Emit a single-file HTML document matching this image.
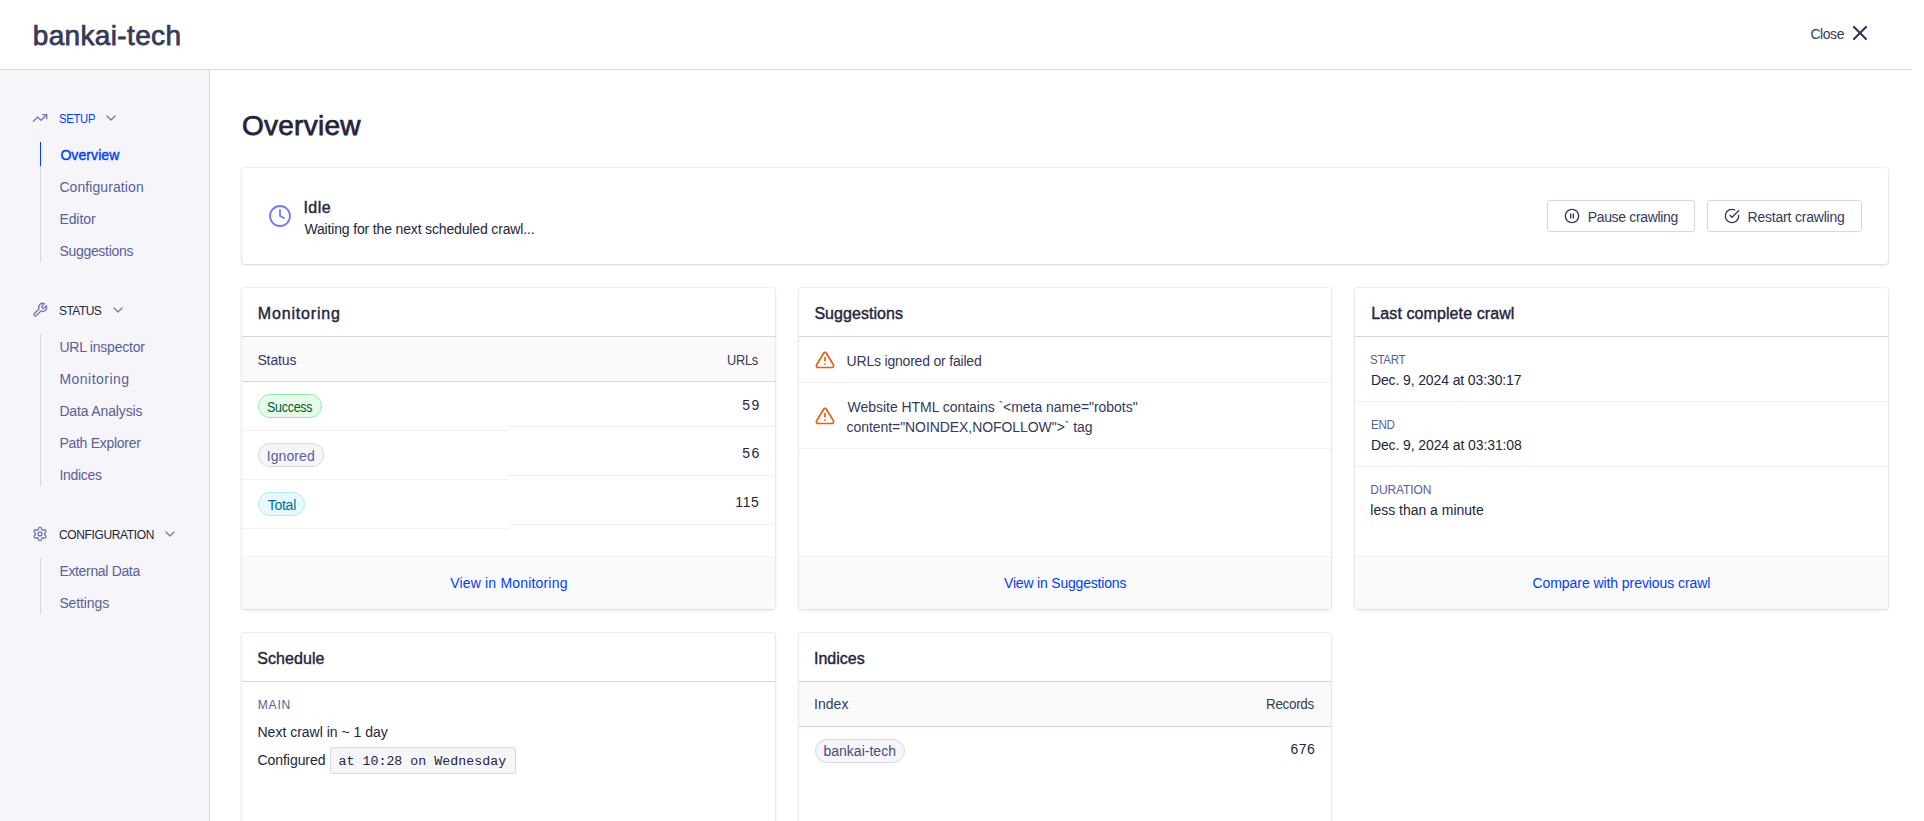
<!DOCTYPE html>
<html><head><meta charset="utf-8"><title>bankai-tech</title>
<style>
html,body{margin:0;padding:0;}
body{width:1924px;height:821px;overflow:hidden;position:relative;background:#fff;font-family:"Liberation Sans",sans-serif;}
.t{position:absolute;line-height:20px;white-space:nowrap;}
.r{position:absolute;}
.i{position:absolute;overflow:visible;}
</style></head><body>
<div class="r" style="left:0px;top:69px;width:1911px;height:1px;background:#d6d6e7"></div>
<div class="t" style="top:26px;font-size:28px;color:#36395a;letter-spacing:0.34px;-webkit-text-stroke:0.75px #36395a;left:32.8px;">bankai-tech</div>
<div class="t" style="top:24px;font-size:14px;color:#36395a;letter-spacing:-0.425px;left:1810.4px;">Close</div>
<svg class="i" style="left:1848px;top:21px" width="24" height="24" viewBox="0 0 24 24" fill="none" stroke="#36395a" stroke-width="2.2" stroke-linecap="round" stroke-linejoin="round"><line x1="18" y1="6" x2="6" y2="18"/><line x1="6" y1="6" x2="18" y2="18"/></svg>
<div class="r" style="left:0px;top:70px;width:209px;height:751px;background:#f5f5fa"></div>
<div class="r" style="left:209px;top:70px;width:1px;height:751px;background:#d6d6e7"></div>
<svg class="i" style="left:32px;top:110px" width="16" height="16" viewBox="0 0 24 24" fill="none" stroke="#777aaf" stroke-width="2" stroke-linecap="round" stroke-linejoin="round"><polyline points="22 7 13.5 15.5 8.5 10.5 2 17"/><polyline points="16 7 22 7 22 13"/></svg>
<div class="t" style="top:109px;font-size:12px;color:#003dff;letter-spacing:-0.3px;left:59.16px;transform:scaleX(0.9402);transform-origin:0 0;">SETUP</div>
<svg class="i" style="left:102.7px;top:110px" width="16" height="16" viewBox="0 0 24 24" fill="none" stroke="#777aaf" stroke-width="2" stroke-linecap="round" stroke-linejoin="round"><polyline points="6 9 12 15 18 9"/></svg>
<div class="r" style="left:40px;top:142px;width:1px;height:120px;background:#d6d6e7"></div>
<div class="r" style="left:40px;top:142px;width:1px;height:24px;background:#003dff"></div>
<div class="t" style="top:145px;font-size:14px;color:#003dff;letter-spacing:0.086px;-webkit-text-stroke:0.4px #003dff;left:60.4px;">Overview</div>
<div class="t" style="top:177px;font-size:14px;color:#5a5e9a;letter-spacing:0.083px;left:59.4px;">Configuration</div>
<div class="t" style="top:209px;font-size:14px;color:#5a5e9a;letter-spacing:-0.08px;left:59.4px;">Editor</div>
<div class="t" style="top:241px;font-size:14px;color:#5a5e9a;letter-spacing:-0.3px;left:59.4px;">Suggestions</div>
<svg class="i" style="left:32px;top:302px" width="16" height="16" viewBox="0 0 24 24" fill="none" stroke="#777aaf" stroke-width="2" stroke-linecap="round" stroke-linejoin="round"><path d="M14.7 6.3a1 1 0 0 0 0 1.4l1.6 1.6a1 1 0 0 0 1.4 0l3.77-3.77a6 6 0 0 1-7.94 7.94l-6.91 6.91a2.12 2.12 0 0 1-3-3l6.91-6.91a6 6 0 0 1 7.94-7.94l-3.76 3.76z"/></svg>
<div class="t" style="top:301px;font-size:12px;color:#23263b;letter-spacing:-0.56px;left:59px;">STATUS</div>
<svg class="i" style="left:109.7px;top:302px" width="16" height="16" viewBox="0 0 24 24" fill="none" stroke="#777aaf" stroke-width="2" stroke-linecap="round" stroke-linejoin="round"><polyline points="6 9 12 15 18 9"/></svg>
<div class="r" style="left:40px;top:334px;width:1px;height:152px;background:#d6d6e7"></div>
<div class="t" style="top:337px;font-size:14px;color:#5a5e9a;letter-spacing:-0.225px;left:59.4px;">URL inspector</div>
<div class="t" style="top:369px;font-size:14px;color:#5a5e9a;letter-spacing:0.478px;left:59.4px;">Monitoring</div>
<div class="t" style="top:401px;font-size:14px;color:#5a5e9a;letter-spacing:-0.142px;left:59.4px;">Data Analysis</div>
<div class="t" style="top:433px;font-size:14px;color:#5a5e9a;letter-spacing:-0.283px;left:59.4px;">Path Explorer</div>
<div class="t" style="top:465px;font-size:14px;color:#5a5e9a;letter-spacing:-0.3px;left:59.4px;">Indices</div>
<svg class="i" style="left:32px;top:526px" width="16" height="16" viewBox="0 0 24 24" fill="none" stroke="#777aaf" stroke-width="2" stroke-linecap="round" stroke-linejoin="round"><path d="M12.22 2h-.44a2 2 0 0 0-2 2v.18a2 2 0 0 1-1 1.73l-.43.25a2 2 0 0 1-2 0l-.15-.08a2 2 0 0 0-2.73.73l-.22.38a2 2 0 0 0 .73 2.730l.15.1a2 2 0 0 1 1 1.72v.51a2 2 0 0 1-1 1.74l-.15.09a2 2 0 0 0-.73 2.73l.22.38a2 2 0 0 0 2.73.73l.15-.08a2 2 0 0 1 2 0l.43.25a2 2 0 0 1 1 1.73V20a2 2 0 0 0 2 2h.44a2 2 0 0 0 2-2v-.18a2 2 0 0 1 1-1.73l.43-.25a2 2 0 0 1 2 0l.15.08a2 2 0 0 0 2.73-.73l.22-.39a2 2 0 0 0-.73-2.73l-.15-.08a2 2 0 0 1-1-1.74v-.5a2 2 0 0 1 1-1.74l.15-.09a2 2 0 0 0 .73-2.73l-.22-.38a2 2 0 0 0-2.73-.73l-.15.08a2 2 0 0 1-2 0l-.43-.25a2 2 0 0 1-1-1.73V4a2 2 0 0 0-2-2z"/><circle cx="12" cy="12" r="3"/></svg>
<div class="t" style="top:525px;font-size:12px;color:#23263b;letter-spacing:-0.367px;left:59px;">CONFIGURATION</div>
<svg class="i" style="left:162px;top:526px" width="16" height="16" viewBox="0 0 24 24" fill="none" stroke="#777aaf" stroke-width="2" stroke-linecap="round" stroke-linejoin="round"><polyline points="6 9 12 15 18 9"/></svg>
<div class="r" style="left:40px;top:558px;width:1px;height:56px;background:#d6d6e7"></div>
<div class="t" style="top:561px;font-size:14px;color:#5a5e9a;letter-spacing:-0.333px;left:59.4px;">External Data</div>
<div class="t" style="top:593px;font-size:14px;color:#5a5e9a;letter-spacing:-0.114px;left:59.4px;">Settings</div>
<div class="t" style="top:116px;font-size:28px;color:#23263b;letter-spacing:0.271px;-webkit-text-stroke:0.75px #23263b;left:241.9px;">Overview</div>
<div class="r" style="left:242px;top:168px;width:1646px;height:96px;background:#fff;border-radius:3px;box-shadow:0 0 0 1px rgba(35,38,59,0.05),0 1px 3px 0 rgba(35,38,59,0.15);"></div>
<svg class="i" style="left:268px;top:204px" width="24" height="24" viewBox="0 0 24 24" fill="none" stroke="#6e7bff" stroke-width="1.8" stroke-linecap="round" stroke-linejoin="round"><circle cx="12" cy="12" r="10"/><polyline points="12 6 12 12 16 14"/></svg>
<div class="t" style="top:198px;font-size:16px;color:#23263b;letter-spacing:0.467px;-webkit-text-stroke:0.4px #23263b;left:303.4px;">Idle</div>
<div class="t" style="top:219px;font-size:14px;color:#23263b;letter-spacing:-0.155px;left:304.4px;">Waiting for the next scheduled crawl...</div>
<div class="r" style="left:1547px;top:200px;width:148px;height:32px;background:#fff;border:1px solid #d6d6e7;border-radius:3px;box-sizing:border-box;"></div>
<svg class="i" style="left:1564px;top:208px" width="16" height="16" viewBox="0 0 24 24" fill="none" stroke="#36395a" stroke-width="2" stroke-linecap="round" stroke-linejoin="round"><circle cx="12" cy="12" r="10"/><line x1="10" y1="15" x2="10" y2="9"/><line x1="14" y1="15" x2="14" y2="9"/></svg>
<div class="t" style="top:207px;font-size:14px;color:#36395a;letter-spacing:-0.331px;left:1587.7px;">Pause crawling</div>
<div class="r" style="left:1707px;top:200px;width:155px;height:32px;background:#fff;border:1px solid #d6d6e7;border-radius:3px;box-sizing:border-box;"></div>
<svg class="i" style="left:1723.5px;top:208px" width="16" height="16" viewBox="0 0 24 24" fill="none" stroke="#36395a" stroke-width="2" stroke-linecap="round" stroke-linejoin="round"><path d="M22 11.08V12a10 10 0 1 1-5.93-9.14"/><polyline points="22 4 12 14.01 9 11.01"/></svg>
<div class="t" style="top:207px;font-size:14px;color:#36395a;letter-spacing:-0.2px;left:1747.5px;">Restart crawling</div>
<div class="r" style="left:242px;top:288px;width:532.67px;height:321px;background:#fff;border-radius:3px;box-shadow:0 0 0 1px rgba(35,38,59,0.05),0 1px 3px 0 rgba(35,38,59,0.15);"></div>
<div class="t" style="top:304px;font-size:16px;color:#23263b;letter-spacing:0.833px;-webkit-text-stroke:0.4px #23263b;left:257.8px;">Monitoring</div>
<div class="r" style="left:242px;top:336px;width:532.67px;height:1px;background:#d6d6e7"></div>
<div class="r" style="left:242px;top:337px;width:532.67px;height:44px;background:#fafafb"></div>
<div class="r" style="left:242px;top:381px;width:532.67px;height:1px;background:#d6d6e7"></div>
<div class="t" style="top:350px;font-size:14px;color:#36395a;letter-spacing:-0.12px;left:257.4px;">Status</div>
<div class="t" style="top:350px;font-size:14px;color:#36395a;letter-spacing:-0.3px;left:727.49px;transform:scaleX(0.9124);transform-origin:0 0;">URLs</div>
<div class="r" style="left:242px;top:430px;width:266.335px;height:1px;background:#f0f0f6"></div>
<div class="r" style="left:242px;top:479px;width:266.335px;height:1px;background:#f0f0f6"></div>
<div class="r" style="left:242px;top:528px;width:266.335px;height:1px;background:#f0f0f6"></div>
<div class="r" style="left:508.335px;top:426px;width:266.335px;height:1px;background:#f0f0f6"></div>
<div class="r" style="left:508.335px;top:475px;width:266.335px;height:1px;background:#f0f0f6"></div>
<div class="r" style="left:508.335px;top:524px;width:266.335px;height:1px;background:#f0f0f6"></div>
<div class="r" style="left:258px;top:394px;width:64px;height:24px;box-sizing:border-box;border:1px solid #8ef0a6;background:#e6fbea;border-radius:12px"></div>
<div class="t" style="top:397px;font-size:14px;color:#005e36;letter-spacing:-0.3px;left:266.81px;transform:scaleX(0.8904);transform-origin:0 0;">Success</div>
<div class="r" style="left:258px;top:443px;width:66px;height:24px;box-sizing:border-box;border:1px solid #d6d6e7;background:#f5f5fa;border-radius:12px"></div>
<div class="t" style="top:446px;font-size:14px;color:#5a5e9a;letter-spacing:0.083px;left:266.7px;">Ignored</div>
<div class="r" style="left:258px;top:492px;width:47px;height:24px;box-sizing:border-box;border:1px solid #a8e9f9;background:#e8f9fe;border-radius:12px"></div>
<div class="t" style="top:495px;font-size:14px;color:#00708f;letter-spacing:-0.25px;left:267.7px;">Total</div>
<div class="t" style="top:395px;font-size:14px;color:#23263b;letter-spacing:1.3px;left:742.3px;">59</div>
<div class="t" style="top:443px;font-size:14px;color:#23263b;letter-spacing:1.3px;left:742.3px;">56</div>
<div class="t" style="top:492px;font-size:14px;color:#23263b;letter-spacing:0.7px;left:735.2px;">115</div>
<div class="r" style="left:242px;top:556px;width:532.67px;height:1px;background:#f0f0f6"></div>
<div class="r" style="left:242px;top:557px;width:532.67px;height:52px;background:#fafafb;border-radius:0 0 3px 3px"></div>
<div class="t" style="top:573px;font-size:14px;color:#003dff;letter-spacing:0.182px;left:450.2px;">View in Monitoring</div>
<div class="r" style="left:798.67px;top:288px;width:532.67px;height:321px;background:#fff;border-radius:3px;box-shadow:0 0 0 1px rgba(35,38,59,0.05),0 1px 3px 0 rgba(35,38,59,0.15);"></div>
<div class="t" style="top:304px;font-size:16px;color:#23263b;letter-spacing:0.05px;-webkit-text-stroke:0.4px #23263b;left:814.4px;">Suggestions</div>
<div class="r" style="left:798.67px;top:336px;width:532.67px;height:1px;background:#d6d6e7"></div>
<svg class="i" style="left:815px;top:349.5px" width="20" height="20" viewBox="0 0 24 24" fill="none" stroke="#e8600a" stroke-width="2" stroke-linecap="round" stroke-linejoin="round"><path d="M10.29 3.86L1.82 18a2 2 0 0 0 1.71 3h16.94a2 2 0 0 0 1.71-3L13.71 3.86a2 2 0 0 0-3.42 0z"/><line x1="12" y1="9" x2="12" y2="13"/><line x1="12" y1="17" x2="12.01" y2="17"/></svg>
<div class="t" style="top:351px;font-size:14px;color:#36395a;letter-spacing:-0.2px;left:846.6px;">URLs ignored or failed</div>
<div class="r" style="left:798.67px;top:382px;width:532.67px;height:1px;background:#f0f0f6"></div>
<svg class="i" style="left:815px;top:405.5px" width="20" height="20" viewBox="0 0 24 24" fill="none" stroke="#e8600a" stroke-width="2" stroke-linecap="round" stroke-linejoin="round"><path d="M10.29 3.86L1.82 18a2 2 0 0 0 1.71 3h16.94a2 2 0 0 0 1.71-3L13.71 3.86a2 2 0 0 0-3.42 0z"/><line x1="12" y1="9" x2="12" y2="13"/><line x1="12" y1="17" x2="12.01" y2="17"/></svg>
<div class="t" style="top:397px;font-size:14px;color:#36395a;letter-spacing:-0.039px;left:847.6px;">Website HTML contains `&lt;meta name="robots"</div>
<div class="t" style="top:417px;font-size:14px;color:#36395a;letter-spacing:-0.068px;left:846.6px;">content="NOINDEX,NOFOLLOW"&gt;` tag</div>
<div class="r" style="left:798.67px;top:448px;width:532.67px;height:1px;background:#f0f0f6"></div>
<div class="r" style="left:798.67px;top:556px;width:532.67px;height:1px;background:#f0f0f6"></div>
<div class="r" style="left:798.67px;top:557px;width:532.67px;height:52px;background:#fafafb;border-radius:0 0 3px 3px"></div>
<div class="t" style="top:573px;font-size:14px;color:#003dff;letter-spacing:-0.189px;left:1004px;">View in Suggestions</div>
<div class="r" style="left:1355.33px;top:288px;width:532.67px;height:321px;background:#fff;border-radius:3px;box-shadow:0 0 0 1px rgba(35,38,59,0.05),0 1px 3px 0 rgba(35,38,59,0.15);"></div>
<div class="t" style="top:304px;font-size:16px;color:#23263b;letter-spacing:0.094px;-webkit-text-stroke:0.4px #23263b;left:1371.3px;">Last complete crawl</div>
<div class="r" style="left:1355.33px;top:336px;width:532.67px;height:1px;background:#d6d6e7"></div>
<div class="t" style="top:350px;font-size:12px;color:#5a5e9a;letter-spacing:-0.3px;left:1370.44px;transform:scaleX(0.9637);transform-origin:0 0;">START</div>
<div class="t" style="top:370px;font-size:14px;color:#23263b;letter-spacing:-0.117px;left:1370.9px;">Dec. 9, 2024 at 03:30:17</div>
<div class="r" style="left:1355.33px;top:401px;width:532.67px;height:1px;background:#f0f0f6"></div>
<div class="t" style="top:415px;font-size:12px;color:#5a5e9a;letter-spacing:-0.3px;left:1370.93px;transform:scaleX(0.9658);transform-origin:0 0;">END</div>
<div class="t" style="top:435px;font-size:14px;color:#23263b;letter-spacing:-0.104px;left:1370.9px;">Dec. 9, 2024 at 03:31:08</div>
<div class="r" style="left:1355.33px;top:466px;width:532.67px;height:1px;background:#f0f0f6"></div>
<div class="t" style="top:480px;font-size:12px;color:#5a5e9a;letter-spacing:-0.086px;left:1370.3px;">DURATION</div>
<div class="t" style="top:500px;font-size:14px;color:#23263b;letter-spacing:-0.012px;left:1370.3px;">less than a minute</div>
<div class="r" style="left:1355.33px;top:556px;width:532.67px;height:1px;background:#f0f0f6"></div>
<div class="r" style="left:1355.33px;top:557px;width:532.67px;height:52px;background:#fafafb;border-radius:0 0 3px 3px"></div>
<div class="t" style="top:573px;font-size:14px;color:#003dff;letter-spacing:-0.069px;left:1532.5px;">Compare with previous crawl</div>
<div class="r" style="left:242px;top:633px;width:532.67px;height:400px;background:#fff;border-radius:3px;box-shadow:0 0 0 1px rgba(35,38,59,0.05),0 1px 3px 0 rgba(35,38,59,0.15);"></div>
<div class="t" style="top:649px;font-size:16px;color:#23263b;letter-spacing:0.086px;-webkit-text-stroke:0.4px #23263b;left:257.2px;">Schedule</div>
<div class="r" style="left:242px;top:681px;width:532.67px;height:1px;background:#d6d6e7"></div>
<div class="t" style="top:695px;font-size:12px;color:#5a5e9a;letter-spacing:0.867px;left:257.7px;">MAIN</div>
<div class="t" style="top:722px;font-size:14px;color:#23263b;left:257.5px;">Next crawl in ~ 1 day</div>
<div class="t" style="top:750px;font-size:14px;color:#23263b;letter-spacing:-0.056px;left:257.5px;">Configured</div>
<div class="r" style="left:330px;top:747px;width:186px;height:27px;box-sizing:border-box;border:1px solid #d6d6e7;background:#f5f5fa;border-radius:3px"></div>
<div class="t" style="top:752px;font-size:13.25px;color:#23263b;letter-spacing:0.03px;font-family:'Liberation Mono',monospace;left:338.5px;">at 10:28 on Wednesday</div>
<div class="r" style="left:798.67px;top:633px;width:532.67px;height:400px;background:#fff;border-radius:3px;box-shadow:0 0 0 1px rgba(35,38,59,0.05),0 1px 3px 0 rgba(35,38,59,0.15);"></div>
<div class="t" style="top:649px;font-size:16px;color:#23263b;-webkit-text-stroke:0.4px #23263b;left:814px;">Indices</div>
<div class="r" style="left:798.67px;top:681px;width:532.67px;height:1px;background:#d6d6e7"></div>
<div class="r" style="left:798.67px;top:682px;width:532.67px;height:44px;background:#fafafb"></div>
<div class="r" style="left:798.67px;top:726px;width:532.67px;height:1px;background:#d6d6e7"></div>
<div class="t" style="top:694px;font-size:14px;color:#36395a;letter-spacing:0.05px;left:814px;">Index</div>
<div class="t" style="top:694px;font-size:14px;color:#36395a;letter-spacing:-0.3px;left:1266.34px;transform:scaleX(0.9573);transform-origin:0 0;">Records</div>
<div class="r" style="left:815px;top:739px;width:90px;height:24px;box-sizing:border-box;border:1px solid #d6d6e7;background:#f5f5fa;border-radius:12px"></div>
<div class="t" style="top:741px;font-size:14px;color:#484c7a;letter-spacing:0.02px;left:823.4px;">bankai-tech</div>
<div class="t" style="top:739px;font-size:14px;color:#23263b;letter-spacing:0.4px;left:1290.6px;">676</div>
</body></html>
